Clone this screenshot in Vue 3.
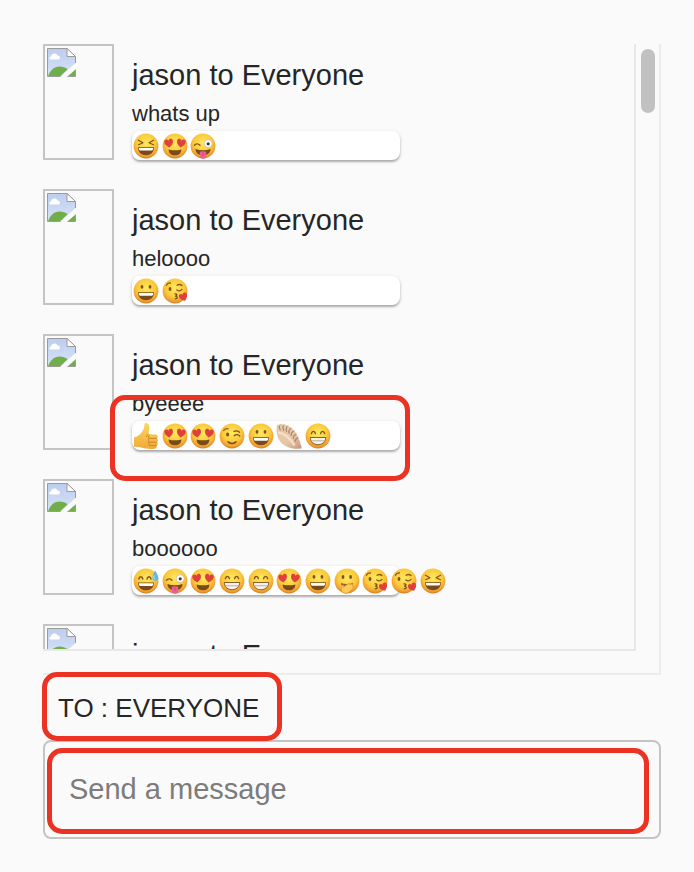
<script setup>
import { ref } from 'vue'

const messages = ref([
  { id: 1, from: 'jason', to: 'Everyone', text: 'whats up', reactions: ['laugh', 'love', 'zany'] },
  { id: 2, from: 'jason', to: 'Everyone', text: 'heloooo', reactions: ['smile', 'kiss'] },
  {
    id: 3,
    from: 'jason',
    to: 'Everyone',
    text: 'byeeee',
    reactions: ['thumb', 'love', 'love', 'wink', 'smile', 'dumpling', 'grin'],
    marked: true,
  },
  {
    id: 4,
    from: 'jason',
    to: 'Everyone',
    text: 'boooooo',
    reactions: ['sweat', 'zany', 'love', 'grin', 'grin', 'love', 'smile', 'giggle', 'kiss', 'kiss', 'laugh'],
  },
  { id: 5, from: 'jason', to: 'Everyone', text: '', reactions: [] },
])

const recipient = ref('Everyone')
const draft = ref('')

function send() {
  const text = draft.value.trim()
  if (!text) return
  messages.value.push({ id: Date.now(), from: 'jason', to: recipient.value, text, reactions: [] })
  draft.value = ''
}
</script>

<template>
  <main class="chat">
    <!-- Shared emoji shapes -->
    <svg class="sprite" width="0" height="0" aria-hidden="true">
      <defs>
        <radialGradient id="skin" cx="50%" cy="38%" r="62%">
          <stop offset="0" stop-color="#fdea5e"/>
          <stop offset="0.6" stop-color="#fbc93c"/>
          <stop offset="0.86" stop-color="#f0a030"/>
          <stop offset="1" stop-color="#d97b23"/>
        </radialGradient>
        <linearGradient id="hand" x1="0" y1="0" x2="0" y2="1">
          <stop offset="0" stop-color="#fcd75c"/>
          <stop offset="1" stop-color="#f0a93a"/>
        </linearGradient>
        <linearGradient id="dough" x1="0" y1="0" x2="1" y2="1">
          <stop offset="0" stop-color="#e3c8a4"/>
          <stop offset="0.6" stop-color="#e8c6a8"/>
          <stop offset="1" stop-color="#c4947a"/>
        </linearGradient>
        <linearGradient id="sky" x1="0" y1="0" x2="0" y2="1">
          <stop offset="0" stop-color="#bccdee"/>
          <stop offset="1" stop-color="#d8e3f8"/>
        </linearGradient>

        <symbol id="face" viewBox="0 0 26 26">
          <circle cx="13" cy="13" r="12.4" fill="url(#skin)"/>
        </symbol>
        <symbol id="heart" viewBox="0 0 10 10">
          <path d="M5 9.4C2.2 7.6.4 5.6.6 3.2.8.8 3.9.2 5 2.6 6.1.2 9.2.8 9.4 3.2 9.6 5.6 7.8 7.6 5 9.4z" fill="#e0403c"/>
        </symbol>

        <symbol id="laugh" viewBox="0 0 26 26">
          <use href="#face"/>
          <path d="M5.400 7.200l4.600 2.500-4.400 2M20.600 7.200l-4.600 2.500 4.400 2" fill="none" stroke="#83501a" stroke-width="1.200" stroke-linecap="round" stroke-linejoin="round"/>
          <path d="M5 14.200h16c0 5-3.400 8-8 8s-8-3-8-8z" fill="#7a4a1a"/>
          <path d="M5.800 15h14.400c0 1.600-.6 2.400-1.200 2.600H7c-.8-.4-1.200-1.200-1.200-2.600z" fill="#fff"/>
        </symbol>

        <symbol id="love" viewBox="0 0 26 26">
          <use href="#face"/>
          <use href="#heart" x="1.800" y="5" width="10" height="10" transform="rotate(-8 7 10)"/>
          <use href="#heart" x="14.200" y="5" width="10" height="10" transform="rotate(8 19 10)"/>
          <path d="M6.600 16.400c4 1.200 8.800 1.200 12.800 0 0 3.600-2.600 5.800-6.400 5.800s-6.400-2.200-6.400-5.800z" fill="#7a4a1a"/>
        </symbol>

        <symbol id="zany" viewBox="0 0 26 26">
          <use href="#face"/>
          <path d="M4.400 12.400c1.400-2 4-2 5.600-.2" fill="none" stroke="#83501a" stroke-width="1.300" stroke-linecap="round"/>
          <circle cx="18.200" cy="10.600" r="4" fill="#fff" stroke="#b9b2a4" stroke-width="0.700"/>
          <circle cx="18.200" cy="10.800" r="1.600" fill="#3b3736"/>
          <path d="M5.400 16c4.800 1.600 10.400 1.600 15.200 0-.2 4-3.400 6.400-7.600 6.400S5.600 20 5.400 16z" fill="#7a4a1a"/>
          <path d="M9.800 18.800c2-.8 4.400-.8 6.400 0v4c0 1.800-1.400 3-3.200 3s-3.200-1.200-3.200-3z" fill="#ee5e95"/>
          <path d="M13 19.400v3.400" stroke="#c93b74" stroke-width="0.800"/>
        </symbol>

        <symbol id="smile" viewBox="0 0 26 26">
          <use href="#face"/>
          <ellipse cx="9" cy="8.800" rx="1.400" ry="1.900" fill="#83501a"/>
          <ellipse cx="17" cy="8.800" rx="1.400" ry="1.900" fill="#83501a"/>
          <path d="M5 14.200h16c0 5-3.400 8-8 8s-8-3-8-8z" fill="#7a4a1a"/>
          <path d="M5.800 15h14.400c0 1.800-.6 2.600-1.200 2.800H7c-.8-.4-1.200-1.200-1.200-2.800z" fill="#fff"/>
        </symbol>

        <symbol id="grin" viewBox="0 0 26 26">
          <use href="#face"/>
          <path d="M6.400 10.600c.6-3 3.400-3 4 0M15.600 10.600c.6-3 3.400-3 4 0" fill="none" stroke="#83501a" stroke-width="1.400" stroke-linecap="round"/>
          <path d="M4.800 14h16.400c0 5-3.400 8.200-8.200 8.200S4.800 19 4.800 14z" fill="#8b5f30"/>
          <path d="M5.800 15h14.400c-.2 3.800-3 6.200-7.200 6.200S6 18.800 5.800 15z" fill="#f7f3ec"/>
          <path d="M6.200 17.800h13.600" stroke="#b7a58f" stroke-width="0.900"/>
        </symbol>

        <symbol id="sweat" viewBox="0 0 26 26">
          <use href="#face"/>
          <path d="M5.800 11c.6-3 3.400-3 4 0M14 11c.6-3 3.400-3 4 0" fill="none" stroke="#83501a" stroke-width="1.400" stroke-linecap="round"/>
          <path d="M5 14.400h16c0 5-3.400 7.800-8 7.800s-8-2.800-8-7.800z" fill="#7a4a1a"/>
          <path d="M5.800 15.200h14.400c0 1.800-.6 2.600-1.200 2.800H7c-.8-.4-1.200-1.200-1.200-2.800z" fill="#fff"/>
          <path d="M22 2.600c1.800 3 3.400 5.200 3.400 7.200a3 3 0 0 1-6 0c0-2 1.200-4.200 2.600-7.200z" fill="#5fb8ea"/>
          <path d="M21.200 8c-.6 1.400-.6 2.400.2 3.200" fill="none" stroke="#c5e8fa" stroke-width="0.900" stroke-linecap="round"/>
        </symbol>

        <symbol id="wink" viewBox="0 0 26 26">
          <use href="#face"/>
          <ellipse cx="8.600" cy="11.600" rx="1.500" ry="2" fill="#83501a"/>
          <path d="M4.600 7.600c1-1.600 2.800-2.200 4.600-1.800" fill="none" stroke="#9a6420" stroke-width="1.200" stroke-linecap="round"/>
          <path d="M15 8.400c2-.8 4-.4 5.600.8M15.200 12.800c1.600-1.600 4-1.400 5.600.2" fill="none" stroke="#83501a" stroke-width="1.300" stroke-linecap="round"/>
          <path d="M9 18.800c2.400 2 5.600 2 8 0" fill="none" stroke="#7a4a1a" stroke-width="1.500" stroke-linecap="round"/>
        </symbol>

        <symbol id="kiss" viewBox="0 0 26 26">
          <use href="#face"/>
          <ellipse cx="8" cy="11" rx="1.400" ry="1.900" fill="#83501a"/>
          <path d="M4.400 7.200c.8-1.600 2.400-2.400 4-2.200M15 7.200c1.800-1 3.600-.8 5 .4M14.800 12c1.600 1.200 3.800 1 5.200-.6" fill="none" stroke="#8a551c" stroke-width="1.300" stroke-linecap="round"/>
          <path d="M13 15.800c2.200-.2 2.600 1.600.6 2.400 2.400.4 2.200 2.600-.4 2.600" fill="none" stroke="#7a4a1a" stroke-width="1.300" stroke-linecap="round" stroke-linejoin="round"/>
          <use href="#heart" x="16.800" y="14.400" width="9.400" height="9.400" transform="rotate(-22 21 19)"/>
        </symbol>

        <symbol id="giggle" viewBox="0 0 26 26">
          <use href="#face"/>
          <ellipse cx="9" cy="9" rx="1.400" ry="2.100" fill="#83501a"/>
          <ellipse cx="16.600" cy="9" rx="1.400" ry="2.100" fill="#83501a"/>
          <path d="M6.800 15c4 1.200 8.400 1.200 12.400 0-.4 2.800-2.800 4.600-6.200 4.600S7.200 17.800 6.800 15z" fill="#9a5f22"/>
          <path d="M7.200 21l1-3.200c.4-1.200 1.600-1 1.600.2l-.2 1 5-3.400c1-.6 1.800.4 1 1.200l2.200-.8c1-.2 1.400 1 .4 1.400 1.200 0 1.400 1.200.4 1.600 1 .4.8 1.600-.2 1.800l-3.600 3.600c-2.400 1.400-5.400 1-6.800-.6-.6-.8-.8-1.800-.8-2.800z" fill="#fccb55" stroke="#df9238" stroke-width="0.700" stroke-linejoin="round"/>
        </symbol>

        <symbol id="thumb" viewBox="0 0 26 26">
          <path d="M1 14.400c2-.2 4-1.200 5.600-2.800 2.600-2.600 4.400-4.600 4.600-8C11.400.2 12.600-.2 14 .2c2.400.8 2.800 4.200 2 7.400l-.6 3.600 7.400.4c2.400.2 2.600 3 .8 3.800 2 .6 2 3.200.2 3.800 1.600.8 1.200 3-.4 3.400.8 1.400 0 3-1.800 3.200-4.600.4-9.400.2-12.400-1C7 23.800 4.400 24.400 1 23.800z" fill="url(#hand)"/>
          <path d="M15.400 11.200c-1.400.4-2 1.400-1.800 2.400M23.600 15.400h-7.400M23.800 19.200h-7.600M23.400 22.600h-6.800M16.200 12.400c-1.200 1.400-1 2.400 0 3-1.200 1.200-1 2.800 0 3.800-.8 1.200-.6 2.600.4 3.400" fill="none" stroke="#c98227" stroke-width="0.900" stroke-linecap="round"/>
        </symbol>

        <symbol id="dumpling" viewBox="0 0 26 26">
          <path d="M.8 4c-.4-1.600.8-2.600 2.200-2.200 1-1.400 2.800-1.200 3.600-.2 1.400-.8 3-.4 3.600.8 1.600-.4 3 .2 3.400 1.600 1.600 0 2.800.8 3 2.200 1.600.4 2.600 1.600 2.600 3 1.400.8 2.200 2 2 3.400 1.400 1 1.800 2.400 1.400 3.600 1.400 1.400 2 3.200 1.600 4.600 1.200 1.400 1.600 3.200 1.200 4.600C17.600 26.800 9 24.800 4.400 18.800 1 14.400-.2 9.200.8 4z" fill="url(#dough)"/>
          <path d="M3.400 3c-.2 1.400 0 2.600.8 3.800M7.200 2.800c-.6 1.600-.4 3.200.6 4.600M11 3.800c-1 1.400-1.200 3.200-.4 4.800M14.400 5.600c-1.400 1.200-1.800 3-1.400 4.800M17.200 8.200c-1.600 1-2.200 2.600-2 4.400M19.600 11.400c-1.600.8-2.400 2.200-2.400 4M21.400 15c-1.400.6-2.200 1.800-2.400 3.400" fill="none" stroke="#a68467" stroke-width="1.100" stroke-linecap="round"/>
          <path d="M3 9.800c5.400.6 10.800 5.200 15 11.800" fill="none" stroke="#f5dfc8" stroke-width="2.400" stroke-linecap="round"/>
        </symbol>

        <symbol id="missing" viewBox="0 0 29 29">
          <path d="M.5.5H20l8.500 8V15L13.500 28.500H.5z" fill="url(#sky)"/>
          <path d="M4 11.600c-2.200-.2-2-3 0-3.200.6-3.400 5.600-3.800 6.400-.8 2.800-.4 3.600 3.600 1.200 4z" fill="#fff"/>
          <path d="M1 28.500c1.800-6 6.200-10 11.600-10 3.200 0 5.800 1 8 2.800l-7.600 7.200z" fill="#6fae49"/>
          <path d="M28.500 21.600v6.900h-8z" fill="#6fae49"/>
          <path d="M28.500 15V8.500L20 .5H.5v28h13M28.500 21.600v6.900h-8" fill="none" stroke="#9b9b9b"/>
          <path d="M20 .5v8h8.500z" fill="#fff" stroke="#9b9b9b" stroke-linejoin="round"/>
        </symbol>
      </defs>
    </svg>

    <section class="panel">
      <ul class="messages">
        <li v-for="message in messages" :key="message.id" class="message">
          <div class="avatar">
            <svg class="avatar-icon" width="29" height="29" aria-hidden="true"><use href="#missing"/></svg>
          </div>
          <div class="body">
            <h2 class="title">{{ message.from }} to {{ message.to }}</h2>
            <p class="text">{{ message.text }}</p>
            <div class="reactions">
              <svg v-for="(name, i) in message.reactions" :key="i" class="emoji" width="26" height="26" role="img" :aria-label="name">
                <use :href="`#${name}`"/>
              </svg>
            </div>
          </div>
          <span v-if="message.marked" class="mark mark-reactions"></span>
        </li>
      </ul>
      <div class="track">
        <div class="thumb"></div>
      </div>
    </section>

    <div class="recipient">
      <button type="button" class="recipient-button">To : {{ recipient }}</button>
      <span class="mark mark-recipient"></span>
    </div>

    <form class="composer" @submit.prevent="send">
      <textarea
        v-model="draft"
        class="composer-input"
        rows="1"
        placeholder="Send a message"
        aria-label="Send a message"
        @keydown.enter.prevent="send"
      ></textarea>
      <span class="mark mark-composer"></span>
    </form>
  </main>
</template>

<style>
body {
  margin: 0;
  background: #fafafa;
}
</style>

<style scoped>
.chat {
  display: flex;
  flex-direction: column;
  box-sizing: border-box;
  height: 100vh;
  min-height: 480px;
  padding: 44px 33px 33px 43px;
  font-family: "Liberation Sans", Arial, sans-serif;
  color: #262626;
}

.sprite {
  position: absolute;
}

.panel {
  display: flex;
  flex: 1;
  min-height: 0;
  border-right: 2px solid #ececec;
  border-bottom: 2px solid #ececec;
}

.messages {
  flex: 1;
  min-width: 0;
  margin: 0 0 22px;
  padding: 0;
  list-style: none;
  overflow-x: hidden;
  overflow-y: auto;
  scrollbar-width: none;
  border-right: 2px solid #e8e8e8;
  border-bottom: 2px solid #e8e8e8;
}

.track {
  width: 14px;
  padding: 5px 4px 0 5px;
}

.thumb {
  height: 64px;
  border-radius: 7px;
  background: #c1c1c1;
}

.message {
  position: relative;
  display: flex;
  gap: 18px;
  padding-bottom: 29px;
}

.avatar {
  box-sizing: border-box;
  flex: none;
  width: 71px;
  height: 116px;
  padding: 2px;
  border: 2px solid #c4c4c4;
}

.avatar-icon {
  display: block;
}

.body {
  flex: 1;
  min-width: 0;
  padding-top: 13px;
}

.title {
  margin: 0;
  font-size: 29px;
  font-weight: 400;
  line-height: 36px;
}

.text {
  height: 34px;
  margin: 4px 0 0;
  font-size: 22px;
  line-height: 34px;
}

.reactions {
  display: flex;
  align-items: center;
  gap: 1%;
  box-sizing: border-box;
  width: 268px;
  height: 29px;
  padding-left: 1px;
  border-radius: 8px;
  background: #fff;
  box-shadow: 0 2px 2px rgba(0, 0, 0, 0.25), 0 1px 4px rgba(0, 0, 0, 0.12);
}

.emoji {
  flex: none;
}

.recipient {
  position: relative;
  display: flex;
  align-items: center;
  height: 65px;
}

.recipient-button {
  padding: 0 15px;
  border: 0;
  background: none;
  color: inherit;
  font-family: inherit;
  font-size: 26px;
  line-height: 32px;
  text-transform: uppercase;
  cursor: pointer;
}

.composer {
  position: relative;
  border: 2px solid #c4c4c4;
  border-radius: 8px;
}

.composer-input {
  display: block;
  box-sizing: border-box;
  width: 100%;
  padding: 29px 24px 30px;
  border: 0;
  outline: 0;
  resize: none;
  overflow: hidden;
  background: none;
  color: inherit;
  font-family: inherit;
  font-size: 29px;
  line-height: 36px;
}

.composer-input::placeholder {
  color: #7c7c7c;
  opacity: 1;
}

/* Red outlines drawn over the content */
.mark {
  position: absolute;
  z-index: 1;
  box-sizing: border-box;
  border: 5px solid #ec3323;
  border-radius: 15px;
  pointer-events: none;
}

.mark-reactions {
  top: 61px;
  left: 67px;
  width: 300px;
  height: 86px;
}

.mark-recipient {
  top: -3px;
  left: -1px;
  width: 240px;
  height: 69px;
}

.mark-composer {
  top: 6px;
  right: 10px;
  bottom: 3px;
  left: 2px;
}
</style>
